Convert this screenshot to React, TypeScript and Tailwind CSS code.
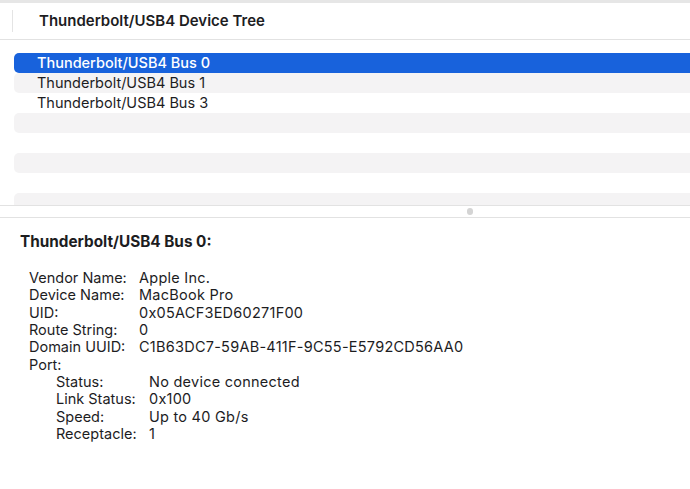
import React from "react";

const font = { fontFamily: 'Inter, "Liberation Sans", Arial, sans-serif' };

type Item = { label: string; value: string; indent?: boolean };

const details: Item[] = [
  { label: "Vendor Name:", value: "Apple Inc." },
  { label: "Device Name:", value: "MacBook Pro" },
  { label: "UID:", value: "0x05ACF3ED60271F00" },
  { label: "Route String:", value: "0" },
  { label: "Domain UUID:", value: "C1B63DC7-59AB-411F-9C55-E5792CD56AA0" },
  { label: "Port:", value: "" },
  { label: "Status:", value: "No device connected", indent: true },
  { label: "Link Status:", value: "0x100", indent: true },
  { label: "Speed:", value: "Up to 40 Gb/s", indent: true },
  { label: "Receptacle:", value: "1", indent: true },
];

const buses = ["Thunderbolt/USB4 Bus 0", "Thunderbolt/USB4 Bus 1", "Thunderbolt/USB4 Bus 3"];

export default function App() {
  const rows = [...buses, "", "", "", "", ""];
  return (
    <div className="w-[690px] h-[489px] overflow-hidden bg-white text-[#1d1d1f] flex flex-col" style={font}>
      <div className="h-[3px] bg-[#e6e6e6]" />
      {/* header */}
      <div className="h-[37px] flex items-center border-b border-[#e2e2e2] shrink-0">
        <div className="w-[13px] h-[22px] border-r border-[#e4e4e4]" />
        <div className="pl-[26px] text-[15px] font-semibold">Thunderbolt/USB4 Device Tree</div>
      </div>
      {/* list */}
      <div className="h-[165px] overflow-hidden pt-[13px] pl-[14px] shrink-0">
        {rows.map((r, i) => (
          <div
            key={i}
            className={
              "h-[20px] flex items-center pl-[23px] text-[14.5px] rounded-l-[5px] " +
              (i === 0 ? "bg-[#1862dc] text-white font-medium" : i % 2 === 1 ? "bg-[#f4f3f4]" : "")
            }
          >
            {r}
          </div>
        ))}
      </div>
      {/* split divider */}
      <div className="h-[13px] border-t border-b border-[#e2e2e2] flex items-center shrink-0">
        <div className="ml-[467px] w-[6px] h-[7px] rounded-full bg-[#d4d4d4]" />
      </div>
      {/* detail */}
      <div className="pl-[20px] pt-[15px]">
        <div className="text-[15.3px] font-bold leading-[18px]">Thunderbolt/USB4 Bus 0:</div>
        <div className="mt-[18px] pl-[9px] text-[14.5px] leading-[17.35px]">
          {details.map((d) => (
            <div key={d.label} className="flex">
              <div className={d.indent ? "pl-[27px] w-[120px]" : "w-[110px]"}>{d.label}</div>
              <div className="tracking-[0.25px]">{d.value}</div>
            </div>
          ))}
        </div>
      </div>
    </div>
  );
}
